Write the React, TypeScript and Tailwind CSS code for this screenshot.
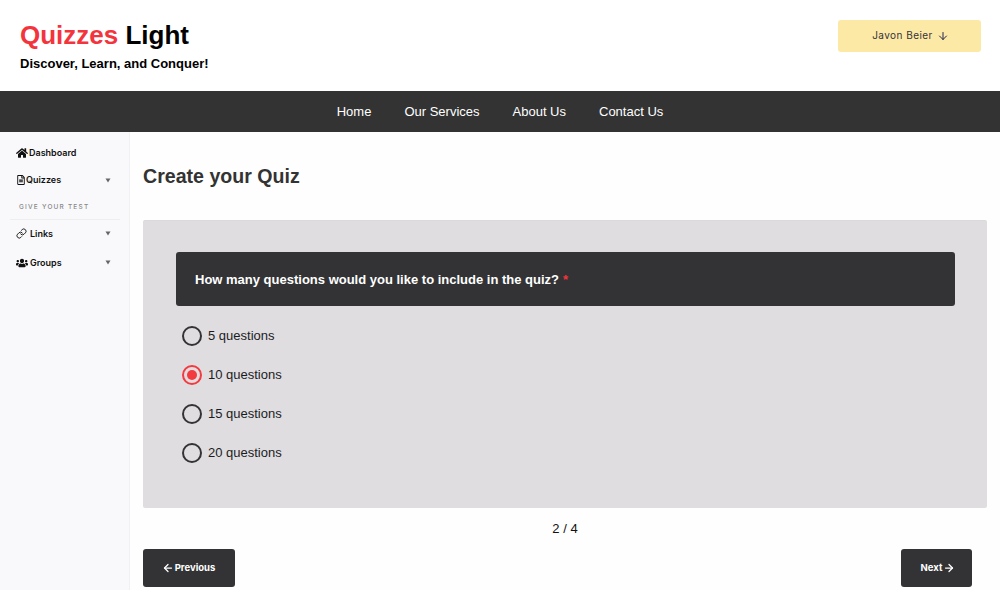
import React from "react";
import { ArrowDown, ArrowLeft, ArrowRight, Link as LinkIcon } from "lucide-react";
import { FaHome, FaRegFileAlt, FaUsers } from "react-icons/fa";

const Caret = () => (
  <svg width="6" height="5" viewBox="0 0 6 5" className="ml-auto"><path d="M0.5 0.5h5L3 4.5z" fill="#666" /></svg>
);

const Radio = ({ label, on }: { label: string; on?: boolean }) => (
  <div className="flex items-center h-[39px] pl-[6px]">
    <span className={`w-5 h-5 rounded-full border-[2.5px] flex items-center justify-center ${on ? "border-[#f33a3f]" : "border-[#333335]"}`}>
      {on && <span className="w-[10px] h-[10px] rounded-full bg-[#f33a3f]" />}
    </span>
    <span className="ml-[6px] text-[13px] text-[#1c1c1e]">{label}</span>
  </div>
);

export default function App() {
  return (
    <div className="h-[590px] w-[1000px] overflow-hidden bg-white font-['Liberation_Sans',sans-serif]">
      <header className="h-[91px] flex justify-between bg-white pl-5 pr-[19px]">
        <div>
          <h1 className="mt-[19px] text-[26px] leading-[32px] font-bold text-black"><span className="text-[#f4343c]">Quizzes</span> Light</h1>
          <p className="mt-[3px] text-[13px] leading-[20px] font-bold text-black">Discover, Learn, and Conquer!</p>
        </div>
        <button className="mt-5 w-[143px] h-[32px] rounded-[3px] bg-[#fde9a6] flex items-center justify-center gap-[4px] pl-[2px] pb-[1px] font-['Inter',sans-serif] text-[10px] tracking-[0.45px] text-[#33333a]">
          Javon Beier <ArrowDown size={12} strokeWidth={2} className="text-[#22264a]" />
        </button>
      </header>
      <nav className="h-[41px] bg-[#333333] flex items-center justify-center gap-[33px] text-[13px] text-white">
        <span>Home</span><span>Our Services</span><span>About Us</span><span>Contact Us</span>
      </nav>
      <div className="flex h-[458px]">
        <aside className="w-[130px] shrink-0 bg-[#f9f9fb] border-r border-[#f1f1f3] pl-[10px] pr-[9px] font-['Inter',sans-serif] text-[9px] font-semibold text-[#111]">
          <div className="h-[42px] flex items-center pl-[6px]"><FaHome size={12} /><span className="ml-[1px]">Dashboard</span></div>
          <div className="h-[12px] flex items-center pl-[6px] pr-[9px] mb-[15px]"><FaRegFileAlt size={10} /><span>Quizzes</span><Caret /></div>
          <div className="pl-[9px] text-[6.5px] font-medium tracking-[1.2px] text-[#888] leading-[12px]">GIVE YOUR TEST</div>
          <div className="border-t border-[#eeeeef] mt-[6px]" />
          <div className="h-[27px] flex items-center pl-[6px] pr-[9px]"><LinkIcon size={11} strokeWidth={2} /><span className="ml-[3px]">Links</span><Caret /></div>
          <div className="h-[31px] -mt-[0px] flex items-center pl-[6px] pr-[9px]"><FaUsers size={12} /><span className="ml-[2px]">Groups</span><Caret /></div>
        </aside>
        <main className="flex-1 min-w-0 bg-[#fefefe] pl-[13px] pr-[13px]">
          <h2 className="mt-[32px] text-[19.6px] leading-[24px] font-bold text-[#333333]">Create your Quiz</h2>
          <section className="mt-[32px] h-[288px] rounded-[2px] bg-[#dfdde0] border-t border-[#dadada] pl-[33px] pr-[32px] pt-[31px]">
            <div className="h-[54px] rounded-[3px] bg-[#333335] flex items-center pl-[19px] pt-[1px] text-[13px] font-bold text-white">
              How many questions would you like to include in the quiz?<span className="ml-[4px] text-[#f4343c]">*</span>
            </div>
            <div className="mt-[10px]">
              <Radio label="5 questions" />
              <Radio label="10 questions" on />
              <Radio label="15 questions" />
              <Radio label="20 questions" />
            </div>
          </section>
          <div className="mt-[12px] text-center text-[13px] leading-[18px] text-[#111]">2 / 4</div>
          <div className="mt-[11px] flex justify-between pr-[15px] font-['Inter',sans-serif] text-[9.5px] font-bold text-white">
            <button className="w-[92px] h-[38px] rounded-[3px] bg-[#333335] flex items-center justify-center gap-[1px] pr-[1px]"><ArrowLeft size={12} strokeWidth={2.5} />Previous</button>
            <button className="w-[71px] h-[38px] rounded-[3px] bg-[#333335] flex items-center justify-center gap-[1px] pl-[3px]">Next<ArrowRight size={12} strokeWidth={2.5} /></button>
          </div>
        </main>
      </div>
    </div>
  );
}
